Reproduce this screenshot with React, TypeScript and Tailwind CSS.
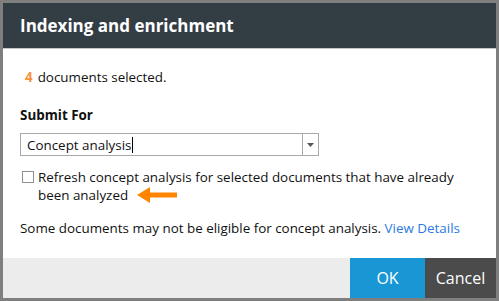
import { useState } from 'react';

const FONT = "font-['Segoe_UI','Open_Sans','Noto_Sans',sans-serif]";

// Flèche orange pointant vers la gauche
const Arrow = () => (
  <svg width="42" height="16" viewBox="0 0 42 16" className="shrink-0">
    <polygon points="0,8 13,0 13,5.5 40,5.5 40,10.5 13,10.5 13,16" fill="#ff8400" strokeLinejoin="round" />
  </svg>
);

export default function App() {
  const [refresh, setRefresh] = useState(false);

  return (
    <div className={`w-[499px] h-[301px] bg-[#7f7f7f] p-[3px] ${FONT}`}>
      <div className="flex h-full flex-col bg-white">
        {/* HEADER */}
        <div className="h-[46px] shrink-0 bg-[#333d44] px-[17px] pt-[12px] border-b border-[#c6c6c6]">
          <h1 className="text-[17px] font-bold leading-[22px] text-white">Indexing and enrichment</h1>
        </div>

        {/* CORPS */}
        <div className="flex-1 px-[17px] text-[13.4px] leading-[18px] text-[#111]">
          <p className="mt-[19px]">
            <span className="mr-[5px] ml-[5px] font-bold text-[#f7913c]">4</span>documents selected.
          </p>

          <p className="mt-[20px] font-bold">Submit For</p>

          <div className="mt-[9px] flex h-[23px] w-[299px] items-stretch border border-[#a9a9a9]">
            <div className="flex flex-1 items-center pl-[6px]">
              Concept analysis<span className="ml-px h-[16px] w-px bg-black" />
            </div>
            <div className="flex w-[16px] items-center justify-center border-l border-[#a9a9a9]">
              <svg width="7" height="4" viewBox="0 0 7 4">
                <polygon points="0,0 7,0 3.5,4" fill="#555" />
              </svg>
            </div>
          </div>

          <label className="mt-[12px] flex items-start gap-[4px] pl-[2px]">
            <input
              type="checkbox"
              checked={refresh}
              onChange={() => setRefresh(!refresh)}
              className="mt-[3px] h-[12px] w-[12px] shrink-0 appearance-none border border-[#8f8f8f] bg-white"
            />
            <span>
              Refresh concept analysis for selected documents that have already
              <br />
              <span className="inline-flex items-center gap-[9px]">
                been analyzed
                <Arrow />
              </span>
            </span>
          </label>

          <p className="mt-[15px]">
            Some documents may not be eligible for concept analysis.{' '}
            <a href="#" className="text-[#2a7ae2]">View Details</a>
          </p>
        </div>

        {/* PIED */}
        <div className="flex h-[40px] shrink-0 justify-end bg-[#ececec]">
          <button className="w-[75px] bg-[#1997d4] text-[16px] text-white">OK</button>
          <button className="w-[71px] bg-[#4b4b4b] text-[16px] text-white">Cancel</button>
        </div>
      </div>
    </div>
  );
}
